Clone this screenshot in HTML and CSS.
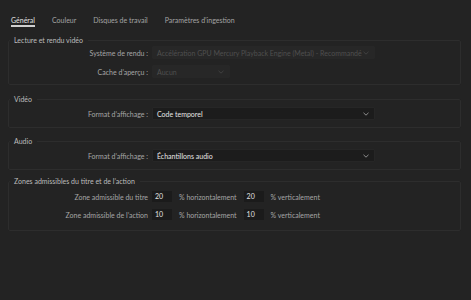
FILE: index.html
```html
<!DOCTYPE html>
<html lang="fr">
<head>
<meta charset="utf-8">
<link rel="stylesheet" href="styles.css">
</head>
<body>
<div class="tabs">
  <span class="tab active">Général</span>
  <span class="tab">Couleur</span>
  <span class="tab">Disques de travail</span>
  <span class="tab">Paramètres d’ingestion</span>
</div>

<fieldset class="group g1">
  <legend>Lecture et rendu vidéo</legend>
  <div class="row">
    <span class="label">Système de rendu :</span>
    <div class="select disabled wide">
      <span>Accélération GPU Mercury Playback Engine (Metal) - Recommandé</span>
      <svg class="chev" viewBox="0 0 6 4" width="6" height="4"><path d="M0.5 0.8 L3 3.2 L5.5 0.8" fill="none" stroke="currentColor" stroke-width="0.9"/></svg>
    </div>
  </div>
  <div class="row">
    <span class="label">Cache d’aperçu :</span>
    <div class="select disabled narrow">
      <span>Aucun</span>
      <svg class="chev" viewBox="0 0 6 4" width="6" height="4"><path d="M0.5 0.8 L3 3.2 L5.5 0.8" fill="none" stroke="currentColor" stroke-width="0.9"/></svg>
    </div>
  </div>
</fieldset>

<fieldset class="group g2">
  <legend>Vidéo</legend>
  <div class="row">
    <span class="label">Format d’affichage :</span>
    <div class="select wide">
      <span>Code temporel</span>
      <svg class="chev" viewBox="0 0 6 4" width="6" height="4"><path d="M0.5 0.8 L3 3.2 L5.5 0.8" fill="none" stroke="currentColor" stroke-width="0.9"/></svg>
    </div>
  </div>
</fieldset>

<fieldset class="group g3">
  <legend>Audio</legend>
  <div class="row">
    <span class="label">Format d’affichage :</span>
    <div class="select wide">
      <span>Échantillons audio</span>
      <svg class="chev" viewBox="0 0 6 4" width="6" height="4"><path d="M0.5 0.8 L3 3.2 L5.5 0.8" fill="none" stroke="currentColor" stroke-width="0.9"/></svg>
    </div>
  </div>
</fieldset>

<fieldset class="group g4">
  <legend>Zones admissibles du titre et de l’action</legend>
  <div class="row zrow">
    <span class="label">Zone admissible du titre</span>
    <span class="num">20</span>
    <span class="unit">% horizontalement</span>
    <span class="num">20</span>
    <span class="unit">% verticalement</span>
  </div>
  <div class="row zrow">
    <span class="label">Zone admissible de l’action</span>
    <span class="num">10</span>
    <span class="unit">% horizontalement</span>
    <span class="num">10</span>
    <span class="unit">% verticalement</span>
  </div>
</fieldset>
</body>
</html>
```

FILE: styles.css
```css
html, body {
  margin: 0;
  padding: 0;
  background: #232323;
  height: 300px;
  overflow: hidden;
}
body {
  font-family: Lato, "Open Sans", sans-serif;
  font-size: 7px;
  color: #a9a9a9;
}
.tabs {
  display: flex;
  gap: 17px;
  padding: 15px 0 0 11px;
}
.tab {
  line-height: 10px;
  border-bottom: 2px solid transparent;
  color: #a4a4a4;
}
.tab.active {
  color: #e2e2e2;
  border-bottom-color: #cfcfcf;
}
.group {
  margin: 0 10px 0 8px;
  padding: 0 0 6px 0;
  border: 1px solid #2d2d2d;
  border-radius: 2px;
}
.group legend {
  margin-left: 1px;
  padding: 0 5px 0 4px;
  line-height: 10px;
  color: #bcbcbc;
}
.g1 { margin-top: 8px; padding-top: 1px; padding-bottom: 6px; }
.g2 { margin-top: 9px; padding-top: 3px; padding-bottom: 7px; }
.g3 { margin-top: 8px; padding-top: 3px; padding-bottom: 7px; }
.g4 { margin-top: 6px; padding-top: 5px; padding-bottom: 10px; }
.row {
  display: flex;
  align-items: center;
  height: 13px;
}
.g1 .row + .row { margin-top: 6px; }
.label {
  width: 139px;
  text-align: right;
  padding-right: 4px;
  color: #a6a6a6;
}
.select {
  height: 13px;
  box-sizing: border-box;
  display: flex;
  align-items: center;
  justify-content: space-between;
  padding: 0 5px 0 4px;
  background: #1c1c1c;
  border: 1px solid #262626;
  border-radius: 1px;
  color: #e6e6e6;
  white-space: nowrap;
  overflow: hidden;
}
.select .chev { color: #9a9a9a; flex: none; }
.select.wide { width: 223px; }
.select.narrow { width: 78px; }
.select.disabled {
  background: #272727;
  border-color: #272727;
  color: #4f4f4f;
}
.select.disabled .chev { color: #444; }
.zrow { height: 11px; }
.zrow + .zrow { margin-top: 7px; }
.num {
  width: 20px;
  height: 11px;
  box-sizing: border-box;
  padding-left: 3px;
  background: #1b1b1b;
  color: #e2e2e2;
  line-height: 11px;
}
.unit {
  padding: 0 7px 0 7px;
  color: #a6a6a6;
}
```
